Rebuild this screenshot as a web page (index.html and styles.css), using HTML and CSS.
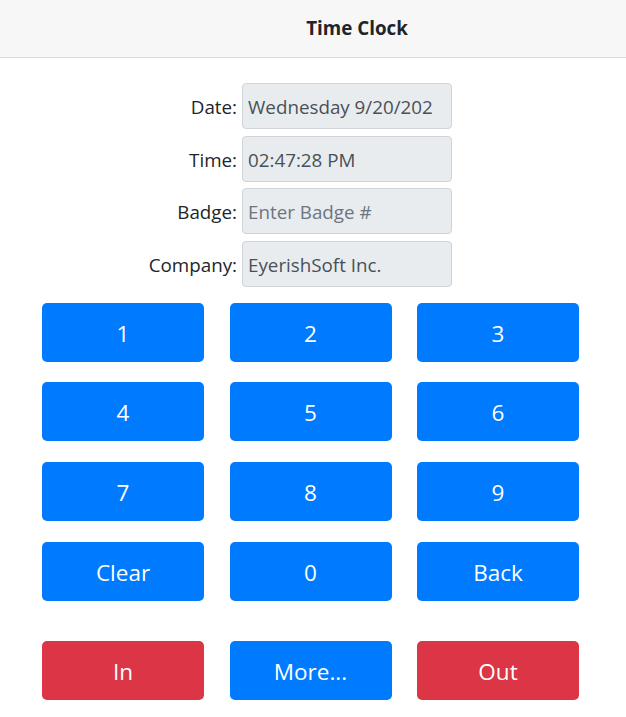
FILE: index.html
```html
<!DOCTYPE html>
<html>
<head>
<meta charset="utf-8">
<link rel="stylesheet" href="styles.css">
</head>
<body>
<header class="topbar"><h1 class="title">Time Clock</h1></header>
<main class="main">
  <div class="form">
    <label class="lbl">Date:</label><div class="field">Wednesday 9/20/202</div>
    <label class="lbl">Time:</label><div class="field">02:47:28 PM</div>
    <label class="lbl">Badge:</label><div class="field placeholder">Enter Badge #</div>
    <label class="lbl">Company:</label><div class="field">EyerishSoft Inc.</div>
  </div>
  <div class="pad">
    <button class="btn blue">1</button>
    <button class="btn blue">2</button>
    <button class="btn blue">3</button>
    <button class="btn blue">4</button>
    <button class="btn blue">5</button>
    <button class="btn blue">6</button>
    <button class="btn blue">7</button>
    <button class="btn blue">8</button>
    <button class="btn blue">9</button>
    <button class="btn blue">Clear</button>
    <button class="btn blue">0</button>
    <button class="btn blue">Back</button>
  </div>
  <div class="pad actions">
    <button class="btn red">In</button>
    <button class="btn blue">More...</button>
    <button class="btn red">Out</button>
  </div>
</main>
</body>
</html>
```
FILE: styles.css
```css
* { box-sizing: border-box; }
html, body { margin: 0; padding: 0; background: #fff; }
body { font-family: "Open Sans", "Noto Sans", sans-serif; color: #212529; }
.topbar {
  height: 58px;
  background: #f7f7f7;
  border-bottom: 1px solid #dcdcdc;
  display: flex;
  align-items: center;
  justify-content: center;
  padding-left: 88px;
  padding-bottom: 2px;
}
.title { margin: 0; font-size: 18.8px; font-weight: 700; color: #212529; }
.main { padding-top: 25px; }
.form {
  display: grid;
  grid-template-columns: 237px 210px;
  column-gap: 5px;
  row-gap: 6.6px;
  align-items: center;
}
.lbl { text-align: right; font-size: 18.8px; padding-top: 2px; }
.field {
  height: 46px;
  background: #e9ecef;
  border: 1px solid #ced4da;
  border-radius: 4px;
  padding: 2px 5px 0;
  display: flex;
  align-items: center;
  font-size: 18.8px;
  color: #495057;
  white-space: nowrap;
  overflow: hidden;
}
.placeholder { color: #6c757d; }
.pad {
  margin: 16px 0 0 42px;
  width: 537px;
  display: grid;
  grid-template-columns: repeat(3, 162px);
  column-gap: 25.5px;
  row-gap: 20.7px;
}
.actions { margin-top: 40px; }
.btn {
  height: 59px;
  border: none;
  border-radius: 5px;
  color: #fff;
  font-family: inherit;
  font-size: 22.5px;
  padding: 2px 0 0;
}
.blue { background: #007bff; }
.red { background: #dc3545; }
```
